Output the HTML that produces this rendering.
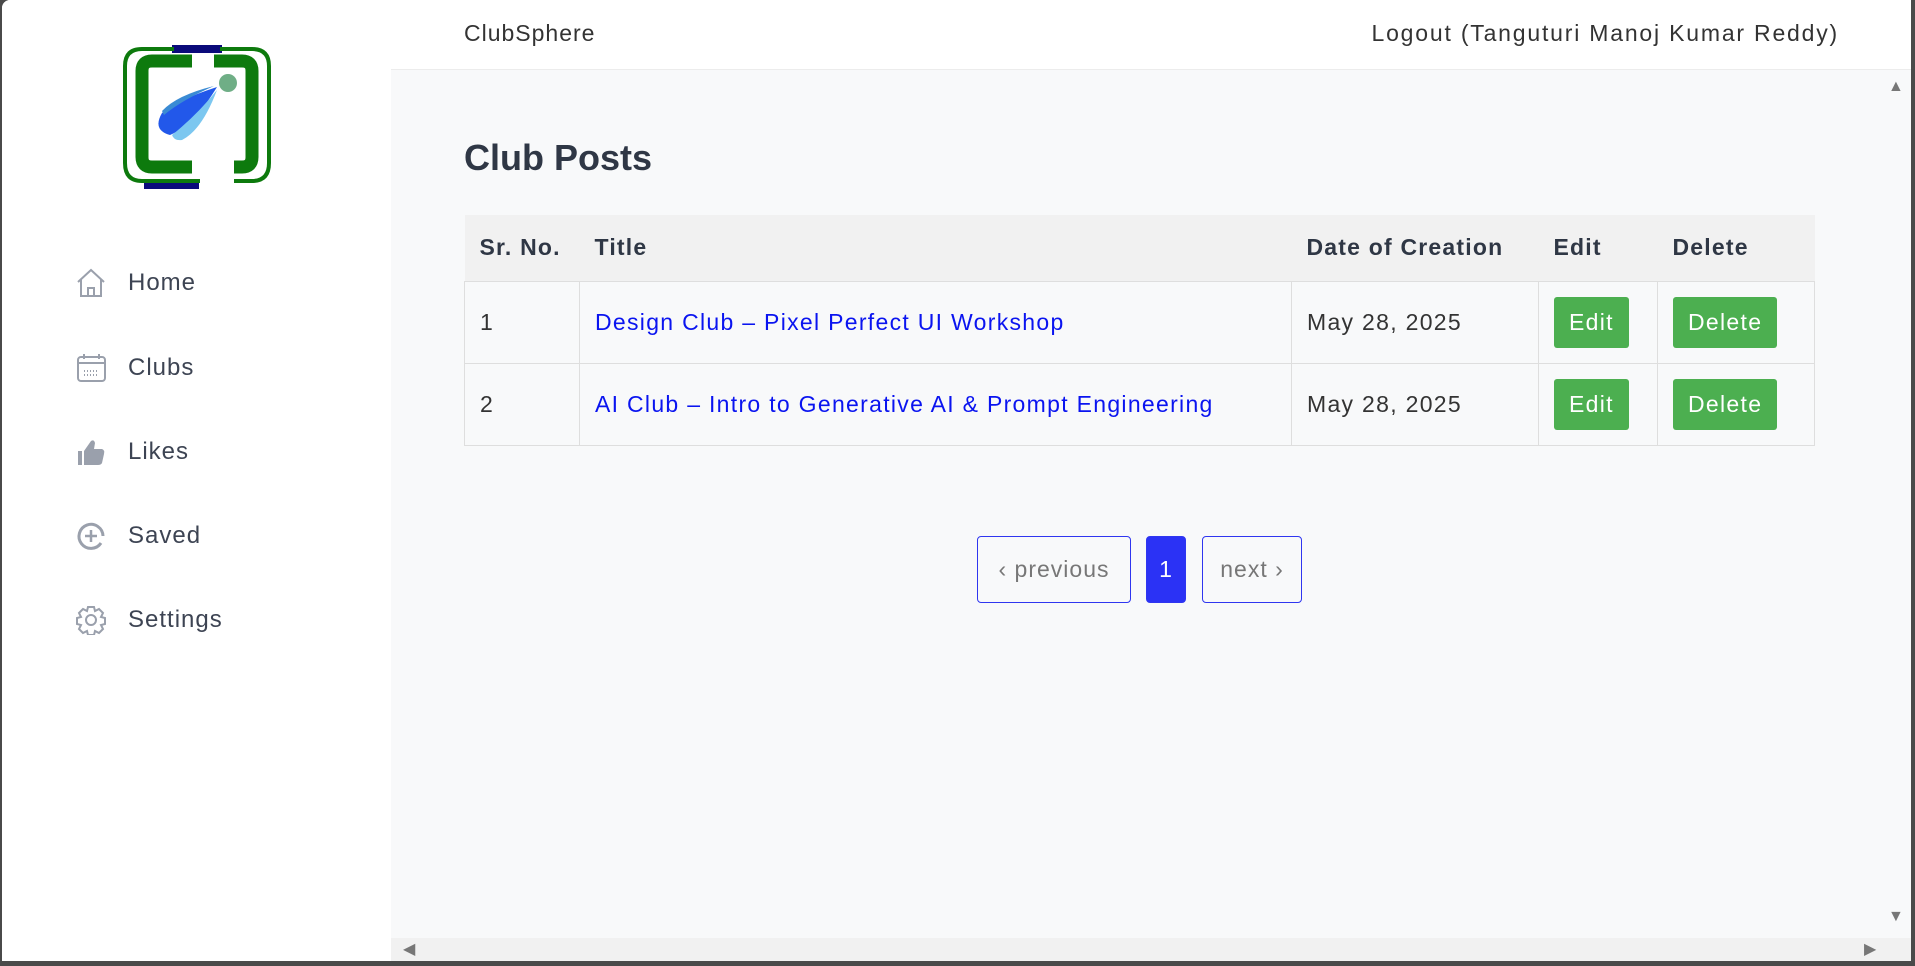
<!DOCTYPE html>
<html><head><meta charset="utf-8"><style>
*{margin:0;padding:0;box-sizing:border-box}
body{width:1915px;height:966px;overflow:hidden;background:#4a4a4a;font-family:"Liberation Sans",sans-serif;position:relative}
#win{position:absolute;left:2px;top:0;width:1909px;height:961px;background:#f8f9fa;border-top-left-radius:8px;overflow:hidden}
#side{position:absolute;left:0;top:0;width:389px;height:961px;background:#fff}
#hdr{position:absolute;left:389px;top:0;right:0;height:70px;background:#fff;border-bottom:1px solid #ececec}
.t{position:absolute;white-space:nowrap}
.nav{position:absolute;left:0;font-size:24px;color:#3d4453;letter-spacing:1px}
.nav svg{position:absolute;left:73px;top:-15px}
.nav span{position:absolute;left:126px;top:-14px}
table{position:absolute;left:462px;top:215px;width:1351px;border-collapse:collapse;font-size:23px;letter-spacing:1.3px}
th{background:#f1f1f1;text-align:left;font-weight:bold;color:#2f3745;height:66px;padding-left:15px;font-size:23px;letter-spacing:1.2px}
td{border:1px solid #dedede;height:82px;padding-left:15px;color:#333}
td a{color:#0a14f0;text-decoration:none}
.btn{display:inline-block;background:#4caf50;color:#fff;border-radius:3px;height:51px;line-height:51px;padding:0 15px;font-size:23px}
.pg{position:absolute;top:536px;height:67px;border:1px solid #2f36f0;border-radius:4px;font-size:23px;color:#777;line-height:65px;text-align:center;letter-spacing:1px}
</style></head><body>
<div id="win">
<div id="side">
<svg style="position:absolute;left:120px;top:45px" width="150" height="144" viewBox="0 0 150 144">
<rect x="50" y="0" width="50" height="8" fill="#0a0a7a"/>
<rect x="22" y="136" width="55" height="8" fill="#0a0a7a"/>
<path d="M52 4 H20 Q3 4 3 21 V118 Q3 136 20 136 H78" fill="none" stroke="#0d7a0d" stroke-width="4"/>
<path d="M98 4 H130 Q147 4 147 21 V118 Q147 136 130 136 H112" fill="none" stroke="#0d7a0d" stroke-width="4"/>
<path d="M70 16 H30 Q20 16 20 26 V112 Q20 122 30 122 H70" fill="none" stroke="#0d7a0d" stroke-width="13"/>
<path d="M92 16 H120 Q130 16 130 26 V112 Q130 122 120 122 H112" fill="none" stroke="#0d7a0d" stroke-width="13"/>
<circle cx="106" cy="38" r="9" fill="#6fae86"/>
<path d="M95 42 Q55 55 40 68 Q30 85 48 90 Q72 80 95 42Z" fill="#2258ea"/>
<path d="M95 45 Q80 85 60 95 Q52 96 50 90 Q75 70 95 45Z" fill="#7cc7f0"/>
<path d="M92 41 Q55 50 40 66 L42 70 Q60 55 92 41Z" fill="#3a8bd4"/>
</svg>
<div class="nav" style="top:283px"><svg width="32" height="30" viewBox="0 0 32 30" fill="none" stroke="#9aa0ac" stroke-width="2"><path d="M3 14 L16 2 L29 14 M6 11 V28 H26 V11 M13 28 V20 H19 V28"/></svg><span>Home</span></div>
<div class="nav" style="top:368px"><svg width="32" height="30" viewBox="0 0 32 30" fill="none" stroke="#9aa0ac" stroke-width="2"><rect x="3" y="4" width="27" height="24" rx="3"/><path d="M3 10 H30 M9 1 V6 M24 1 V6"/><path d="M9 18h14M9 22h14" stroke-dasharray="1 2"/></svg><span>Clubs</span></div>
<div class="nav" style="top:452px"><svg width="32" height="30" viewBox="0 0 32 30"><rect x="3" y="14" width="4" height="14" fill="#9aa0ac"/><path d="M9 14 L16 4 Q19 2 20 6 L19 12 H27 Q30 13 29 17 L27 26 Q26 28 23 28 H9Z" fill="#9aa0ac"/></svg><span>Likes</span></div>
<div class="nav" style="top:536px"><svg width="32" height="30" viewBox="0 0 32 30" fill="none" stroke="#9aa0ac" stroke-width="3"><path d="M26 22 A12 12 0 1 1 28 15"/><path d="M16 9v12M10 15h12" stroke-width="2.5"/></svg><span>Saved</span></div>
<div class="nav" style="top:620px"><svg width="32" height="30" viewBox="0 0 32 30" fill="none" stroke="#9aa0ac" stroke-width="2"><circle cx="16" cy="15" r="5"/><path d="M13 2h6l1 4 4-2 4 4-2 4 4 1v6l-4 1 2 4-4 4-4-2-1 4h-6l-1-4-4 2-4-4 2-4-4-1v-6l4-1-2-4 4-4 4 2z"/></svg><span>Settings</span></div>
</div>
<div id="hdr">
<div class="t" style="left:73px;top:20px;font-size:23px;color:#333;letter-spacing:1px">ClubSphere</div>
<div class="t" style="right:72px;top:20px;font-size:23px;color:#333;letter-spacing:1.8px">Logout (Tanguturi Manoj Kumar Reddy)</div>
</div>
<div class="t" style="left:462px;top:137px;font-size:36px;font-weight:bold;color:#2f3745">Club Posts</div>
<table>
<tr><th style="width:115px">Sr. No.</th><th style="width:712px">Title</th><th style="width:247px">Date of Creation</th><th style="width:119px">Edit</th><th>Delete</th></tr>
<tr><td>1</td><td><a>Design Club – Pixel Perfect UI Workshop</a></td><td>May 28, 2025</td><td><span class="btn">Edit</span></td><td><span class="btn">Delete</span></td></tr>
<tr><td>2</td><td><a>AI Club – Intro to Generative AI &amp; Prompt Engineering</a></td><td>May 28, 2025</td><td><span class="btn">Edit</span></td><td><span class="btn">Delete</span></td></tr>
</table>
<div class="pg" style="left:975px;width:154px">‹ previous</div>
<div class="pg" style="left:1144px;width:40px;background:#2b32f5;color:#fff">1</div>
<div class="pg" style="left:1200px;width:100px">next ›</div>
<div style="position:absolute;left:1879px;top:70px;width:30px;height:868px;background:#f8f9fa"></div>
<div class="t" style="left:1886px;top:78px;font-size:16px;color:#777">▲</div>
<div class="t" style="left:1886px;top:908px;font-size:16px;color:#777">▼</div>
<div style="position:absolute;left:389px;top:938px;width:1520px;height:23px;background:#f1f1f1"></div>
<div class="t" style="left:401px;top:939px;font-size:16px;color:#777">◀</div>
<div class="t" style="left:1862px;top:939px;font-size:16px;color:#777">▶</div>
</div>
</body></html>
